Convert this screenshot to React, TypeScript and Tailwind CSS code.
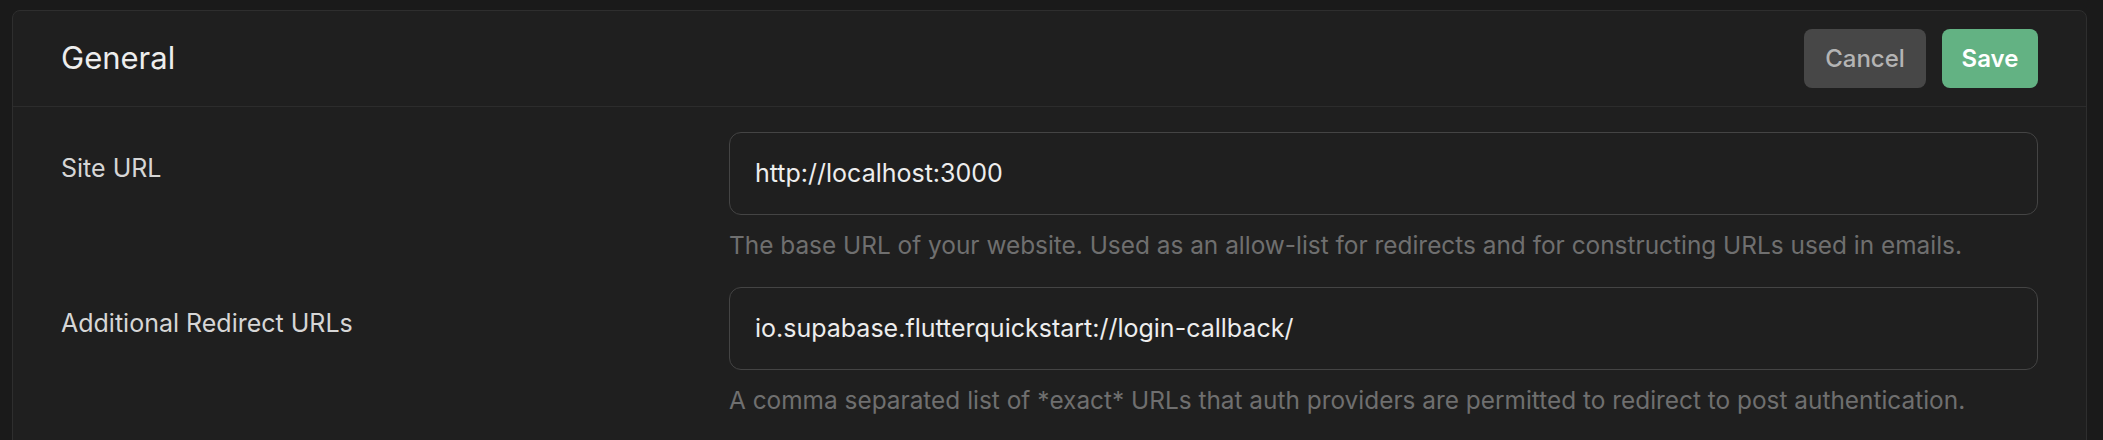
import React from 'react';

interface FieldRowProps {
  label: string;
  value: string;
  description: string;
}

function FieldRow({ label, value, description }: FieldRowProps) {
  return (
    <div className="grid grid-cols-[668px_1fr]">
      <label className="mt-[18px] text-[25px] leading-[37px] text-[#d6d6d6]">{label}</label>
      <div className="flex flex-col">
        <div className="flex h-[83px] items-center rounded-[12px] border border-[#444444] bg-[#1f1f1f] px-[25px]">
          <input
            readOnly
            value={value}
            className="w-full bg-transparent text-[25px] text-[#ededed] outline-none"
          />
        </div>
        <p className="mt-[12px] text-[24.4px] leading-[36px] text-[#6f6f6f]">{description}</p>
      </div>
    </div>
  );
}

export default function App() {
  return (
    <div
      className="h-[440px] w-full overflow-hidden bg-[#1a1a1a] pl-[12px] pt-[10px]"
      style={{ fontFamily: 'Inter, "Noto Sans", sans-serif' }}
    >
      <div className="h-[600px] w-[2075px] rounded-[8px] border border-[#2e2e2e] bg-[#1f1f1f]">
        {/* Header */}
        <div className="flex h-[96px] items-center justify-between border-b border-[#2c2c2c] px-[48px]">
          <h2 className="text-[31px] text-[#ededed]">General</h2>
          <div className="flex gap-[16px]">
            <button className="h-[59px] w-[122px] rounded-[8px] bg-[#474747] text-[24px] font-medium text-[#b4b4b4]">
              Cancel
            </button>
            <button className="h-[59px] w-[96px] rounded-[8px] bg-[#63b283] text-[24px] font-semibold text-white">
              Save
            </button>
          </div>
        </div>

        {/* Fields */}
        <div className="flex flex-col gap-[24px] px-[48px] pt-[25px]">
          <FieldRow
            label="Site URL"
            value="http://localhost:3000"
            description="The base URL of your website. Used as an allow-list for redirects and for constructing URLs used in emails."
          />
          <FieldRow
            label="Additional Redirect URLs"
            value="io.supabase.flutterquickstart://login-callback/"
            description="A comma separated list of *exact* URLs that auth providers are permitted to redirect to post authentication."
          />
        </div>
      </div>
    </div>
  );
}
